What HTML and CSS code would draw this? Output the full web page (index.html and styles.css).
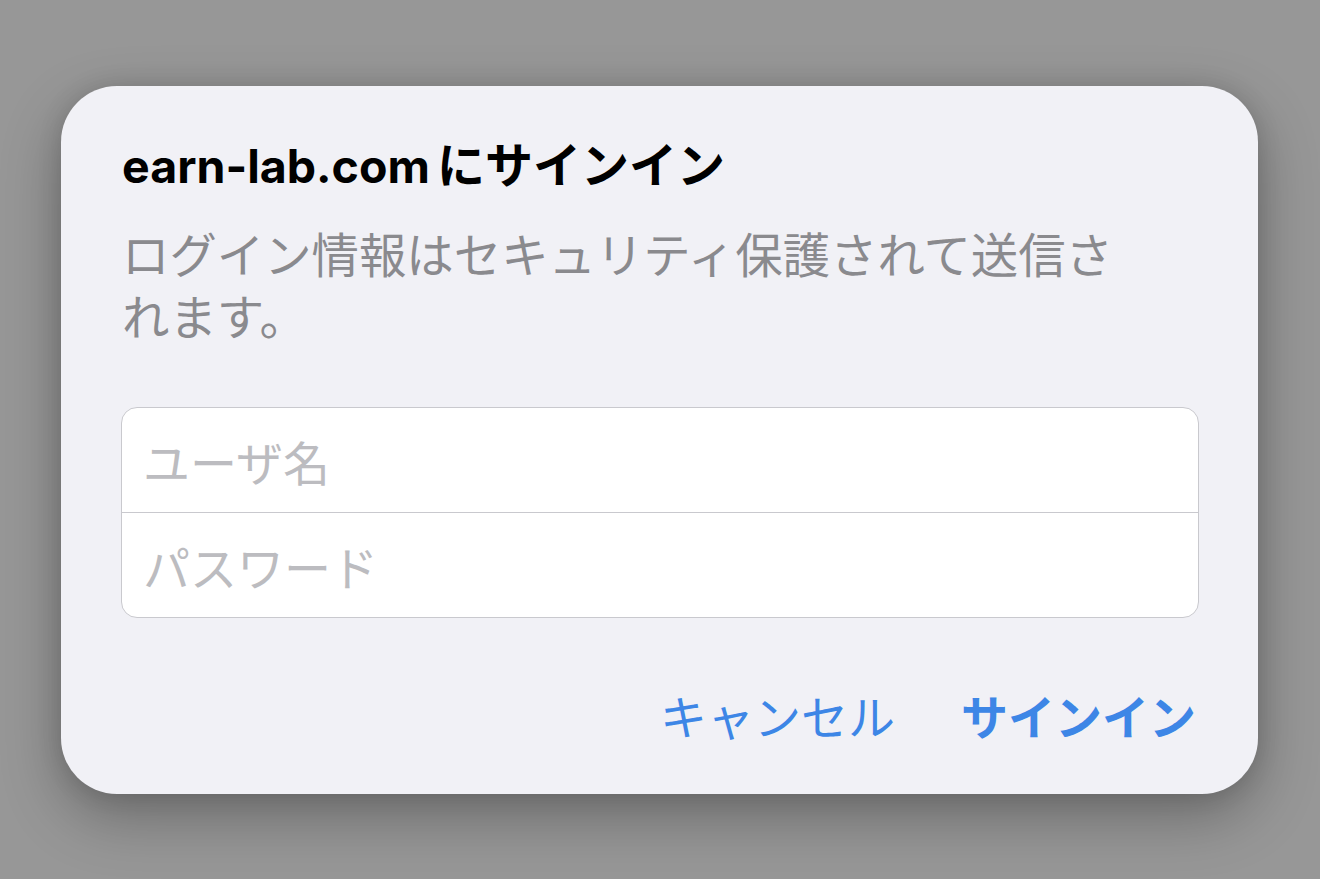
FILE: index.html
```html
<!DOCTYPE html>
<html lang="ja">
<head>
<meta charset="utf-8">
<title>サインイン</title>
<link rel="stylesheet" href="styles.css">
</head>
<body>
<div class="stage">
  <div class="alert">
    <h1 class="title">earn-lab.com<span class="title-ja">にサインイン</span></h1>
    <p class="message">ログイン情報はセキュリティ保護されて送信されます。</p>
    <div class="fields">
      <div class="field">ユーザ名</div>
      <div class="field">パスワード</div>
    </div>
    <div class="actions">
      <span class="btn">キャンセル</span>
      <span class="btn btn-primary">サインイン</span>
    </div>
  </div>
</div>
</body>
</html>
```

FILE: styles.css
```css
html, body {
  margin: 0;
  padding: 0;
  height: 100%;
}
body {
  background: #979797;
  font-family: Inter, "Noto Sans CJK JP", "Noto Sans", sans-serif;
  overflow: hidden;
}
.stage {
  padding: 86px 0 0 61px;
}
.alert {
  box-sizing: border-box;
  width: 1197px;
  height: 708px;
  background: #f1f1f6;
  border-radius: 56px;
  padding: 52px 59px 0 60px;
  box-shadow: 0 22px 60px rgba(0, 0, 0, 0.3), 0 0 24px rgba(0, 0, 0, 0.12);
  display: flex;
  flex-direction: column;
}
.title {
  margin: 0;
  padding-left: 1px;
  font-size: 46.5px;
  line-height: 56px;
  font-weight: 700;
  color: #000;
  letter-spacing: 0;
}
.title-ja {
  font-size: 48px;
  margin-left: 7px;
}
.message {
  margin: 31px 0 0 0;
  padding-left: 1px;
  padding-right: 60px;
  font-size: 47.4px;
  line-height: 62px;
  font-weight: 400;
  color: #8a8a8e;
}
.fields {
  margin-top: 58px;
  background: #fff;
  border: 1px solid #c9c9ce;
  border-radius: 16px;
  display: flex;
  flex-direction: column;
}
.field {
  height: 104px;
  display: flex;
  align-items: center;
  padding-left: 21px;
  font-size: 47px;
  color: #bcbcc0;
}
.field + .field {
  border-top: 1px solid #c9c9ce;
}
.actions {
  margin-top: 46px;
  height: 100px;
  display: flex;
  justify-content: flex-end;
  align-items: center;
  gap: 66px;
  padding-right: 3px;
}
.btn {
  font-size: 47px;
  color: #3d86e6;
}
.btn-primary {
  font-weight: 700;
}
```
